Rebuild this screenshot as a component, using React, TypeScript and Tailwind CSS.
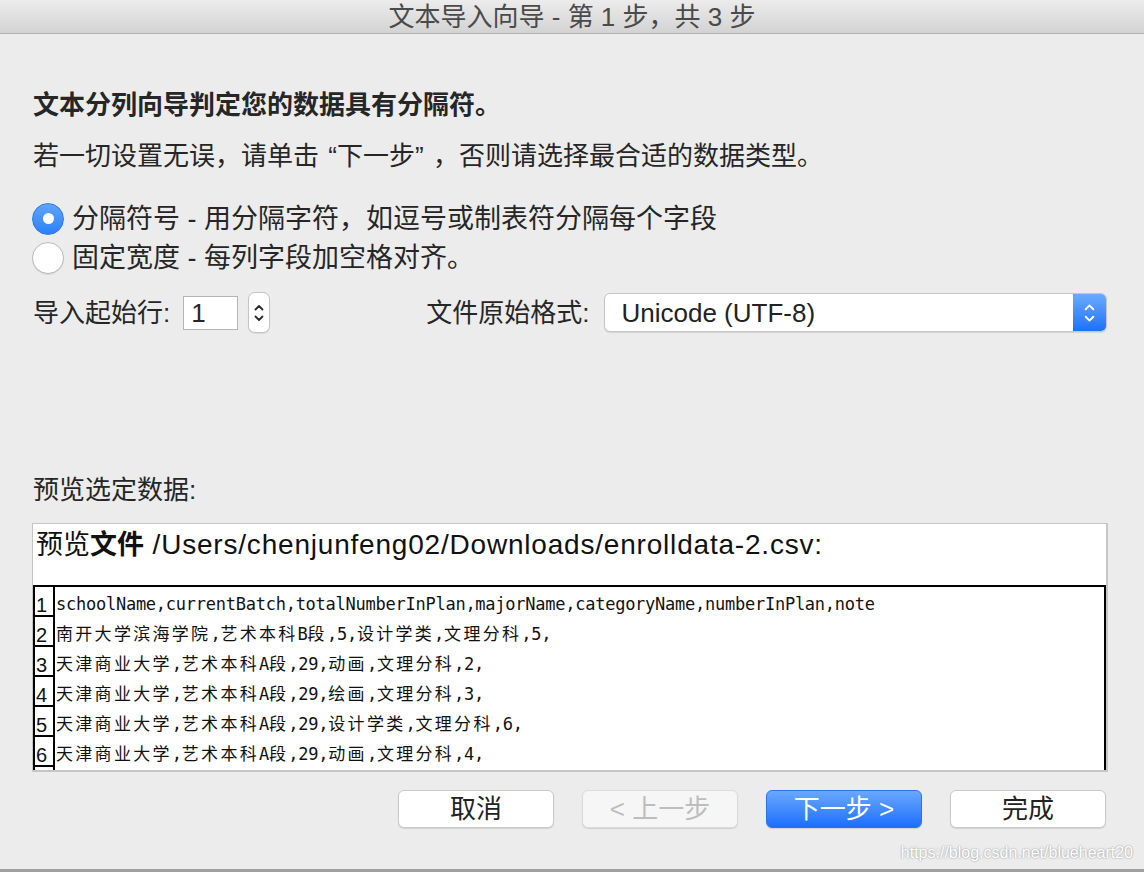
import React from 'react';

const rows = [
  'schoolName,currentBatch,totalNumberInPlan,majorName,categoryName,numberInPlan,note',
  '南开大学滨海学院,艺术本科B段,5,设计学类,文理分科,5,',
  '天津商业大学,艺术本科A段,29,动画,文理分科,2,',
  '天津商业大学,艺术本科A段,29,绘画,文理分科,3,',
  '天津商业大学,艺术本科A段,29,设计学类,文理分科,6,',
  '天津商业大学,艺术本科A段,29,动画,文理分科,4,',
  '',
];

// CJK runs get a little extra tracking so they take about two mono columns
const renderLine = (line: string) =>
  line.split(/([\u4e00-\u9fff]+)/).map((part, i) =>
    i % 2 === 1 ? (
      <span key={i} className="tracking-[2.3px]">
        {part}
      </span>
    ) : (
      <span key={i}>{part}</span>
    )
  );

const Chevrons = ({ color, size }: { color: string; size: number }) => (
  <svg width={size} height={size * 2} viewBox="0 0 12 24" fill="none">
    <path d="M2.5 8.5 L6 5 L9.5 8.5" stroke={color} strokeWidth="1.8" strokeLinecap="round" strokeLinejoin="round" />
    <path d="M2.5 15.5 L6 19 L9.5 15.5" stroke={color} strokeWidth="1.8" strokeLinecap="round" strokeLinejoin="round" />
  </svg>
);

const Radio = ({ checked, label }: { checked: boolean; label: string }) => (
  <div className="h-[39px] flex items-center gap-[8px] -ml-px">
    {checked ? (
      <div className="w-[32px] h-[32px] rounded-full bg-gradient-to-b from-[#5ea3ff] to-[#2d7ff8] border border-[#2c79ec] flex items-center justify-center">
        <div className="w-[11px] h-[11px] rounded-full bg-white" />
      </div>
    ) : (
      <div className="w-[32px] h-[32px] rounded-full bg-white border border-[#b9b9b9] shadow-[0_1px_1px_rgba(0,0,0,0.08)]" />
    )}
    <span className="text-[27px] leading-[32px]">{label}</span>
  </div>
);

const Button = ({ label, variant }: { label: string; variant: 'normal' | 'disabled' | 'primary' }) => {
  const styles =
    variant === 'primary'
      ? 'bg-gradient-to-b from-[#69a8ff] to-[#1a6dfd] border-[#2a74ea] text-white'
      : variant === 'disabled'
      ? 'bg-[#f6f6f6] border-[#dadada] text-[#bdbdbd]'
      : 'bg-white border-[#c9c9c9] text-[#222]';
  return (
    <div
      className={`w-[156px] h-[38px] rounded-[6px] border flex items-center justify-center text-[26px] leading-none shadow-[0_1px_1px_rgba(0,0,0,0.12)] ${styles}`}
    >
      {label}
    </div>
  );
};

export default function App() {
  return (
    <div className="w-[1144px] h-[872px] bg-[#ececec] flex flex-col overflow-hidden font-['Liberation_Sans','Noto_Sans_CJK_SC',sans-serif]">
      {/* title bar */}
      <div className="h-[34px] shrink-0 bg-gradient-to-b from-[#ececec] to-[#d3d3d3] border-b border-[#b0b0b0] flex items-center justify-center">
        <span className="text-[26px] leading-none text-[#4a4a4a]">文本导入向导 - 第 1 步，共 3 步</span>
      </div>

      <div className="flex-1 flex flex-col pl-[33px] pr-[37px] text-[#262626]">
        <p className="mt-[56px] text-[26px] leading-[30px] font-bold">文本分列向导判定您的数据具有分隔符。</p>
        <p className="mt-[21px] text-[26px] leading-[30px]">
          若一切设置无误，请单击<span className="inline-block w-[18px] text-right">“</span>下一步
          <span className="inline-block w-[18px] text-left">”</span>，否则请选择最合适的数据类型。
        </p>

        <div className="mt-[28px] flex flex-col">
          <Radio checked label="分隔符号 - 用分隔字符，如逗号或制表符分隔每个字段" />
          <Radio checked={false} label="固定宽度 - 每列字段加空格对齐。" />
        </div>

        <div className="mt-[15px] h-[41px] flex items-center">
          <span className="text-[26px] leading-none">导入起始行:</span>
          <div className="ml-[13px] w-[55px] h-[34px] bg-white border border-[#b5b5b5] flex items-center pl-[7px] text-[26px] leading-none">
            1
          </div>
          <div className="ml-[10px] w-[22px] h-[41px] bg-white border border-[#c3c3c3] rounded-[7px] flex items-center justify-center shadow-[0_1px_1px_rgba(0,0,0,0.08)]">
            <Chevrons color="#2a2a2a" size={12} />
          </div>
          <span className="ml-[156px] text-[26px] leading-none">文件原始格式:</span>
          <div className="ml-[15px] flex-1 h-[39px] bg-white border border-[#c6c6c6] rounded-[6px] flex items-center overflow-hidden shadow-[0_1px_1px_rgba(0,0,0,0.1)]">
            <span className="flex-1 pl-[16px] text-[26px] leading-none text-[#222]">Unicode (UTF-8)</span>
            <div className="w-[33px] h-full bg-gradient-to-b from-[#6aaaff] to-[#1b70fd] flex items-center justify-center">
              <Chevrons color="#ffffff" size={13} />
            </div>
          </div>
        </div>

        <p className="mt-[142px] text-[26px] leading-[30px]">预览选定数据:</p>

        {/* preview box */}
        <div className="mt-[18px] -ml-px w-[1076px] h-[249px] shrink-0 bg-white border border-r-2 border-b-2 border-[#c6c6c6] flex flex-col overflow-hidden">
          <div className="h-[61px] shrink-0 pt-[5px] pl-[3px] text-[27px] leading-[32px] text-[#111]">
            预览<span className="font-bold">文件</span>
            <span className="text-[28px] tracking-[0.8px]"> /Users/chenjunfeng02/Downloads/enrolldata-2.csv:</span>
          </div>
          <div className="border-t-2 border-x-2 border-black flex flex-col">
            {rows.map((line, i) => (
              <div key={i} className="h-[30px] shrink-0 flex">
                <div className="w-[20px] h-full border-r-2 border-b-2 border-black flex items-end pl-[1px] text-[20px] leading-[20px] text-[#111]">
                  {line ? i + 1 : ''}
                </div>
                <div className="flex-1 pl-[1px] pt-[7px] text-[17px] leading-[21px] tracking-[-0.25px] whitespace-pre text-[#111] font-['DejaVu_Sans_Mono','Noto_Sans_CJK_SC',monospace]">
                  {renderLine(line)}
                </div>
              </div>
            ))}
          </div>
        </div>

        <div className="mt-[18px] flex justify-end gap-[28px] pr-px">
          <Button label="取消" variant="normal" />
          <Button label="< 上一步" variant="disabled" />
          <Button label="下一步 >" variant="primary" />
          <Button label="完成" variant="normal" />
        </div>

        <div className="mt-[15px] -mr-[26px] self-end text-[16px] leading-[20px] text-white [text-shadow:0_0_2px_rgba(0,0,0,0.45)]">
          https://blog.csdn.net/blueheart20
        </div>
      </div>

      <div className="h-[3px] shrink-0 bg-[#a0a0a0]" />
    </div>
  );
}
